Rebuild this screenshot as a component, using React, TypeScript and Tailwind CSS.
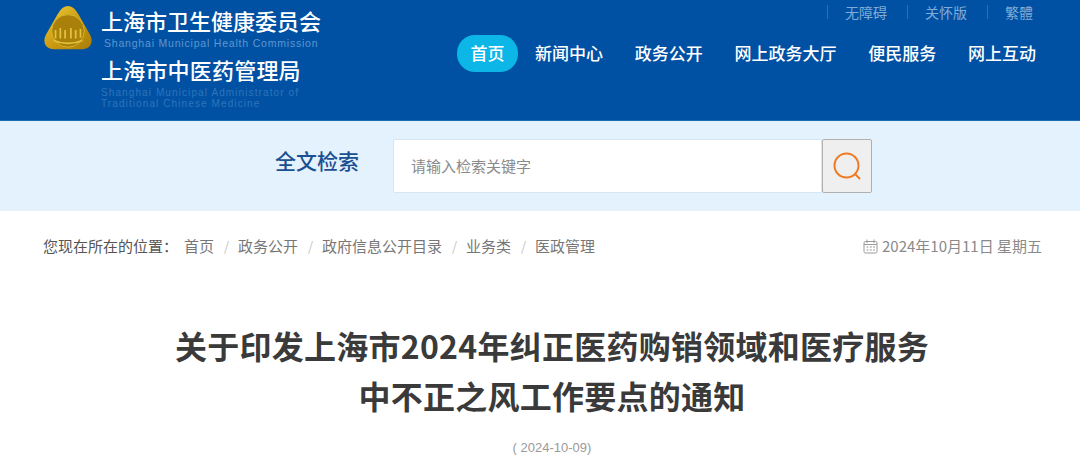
const navItems = ['新闻中心', '政务公开', '网上政务大厅', '便民服务', '网上互动'];
const topLinks = ['无障碍', '关怀版', '繁體'];
const crumbs = ['政务公开', '政府信息公开目录', '业务类', '医政管理'];

function Logo() {
  return (
    <svg width="50" height="48" viewBox="0 0 52 50" className="shrink-0">
      <defs>
        <linearGradient id="gold" x1="0" y1="0" x2="1" y2="1">
          <stop offset="0" stopColor="#f0d23c" />
          <stop offset="0.55" stopColor="#c9980f" />
          <stop offset="1" stopColor="#a87c08" />
        </linearGradient>
      </defs>
      <path
        d="M26 1 C31 1 34 5 37 10 L49 31 C53 39 49 46 41 46 L11 46 C3 46 -1 39 3 31 L15 10 C18 5 21 1 26 1 Z"
        fill="url(#gold)"
      />
      <circle cx="26" cy="27" r="17" fill="#a98009" stroke="#d9b52c" strokeWidth="1" />
      <path
        d="M13 26 v9 M18 24 v11 M23 26 v9 M29 24 v11 M34 26 v9 M39 25 v9 M11 37 C20 41 32 41 41 37"
        stroke="#e3c23d"
        strokeWidth="1.8"
        fill="none"
      />
    </svg>
  );
}

export default function App() {
  return (
    <div className="h-[474px] w-[1080px] overflow-hidden bg-white font-['Noto_Sans_CJK_SC','Liberation_Sans',sans-serif]">
      {/* 头部 */}
      <header className="flex h-[121px] border-b border-[#1b6db5] bg-[#0051a3] pl-[43px] pr-[44px]">
        <div className="pt-[5px]">
          <Logo />
        </div>
        <div className="ml-[8px] w-[230px] text-white">
          <div className="mt-[6px] text-[22px] font-medium leading-[28px]">上海市卫生健康委员会</div>
          <div className="ml-[3px] mt-[2px] font-['Liberation_Sans',sans-serif] text-[10.5px] leading-[14px] tracking-[0.8px] text-[#5f97d0]">
            Shanghai Municipal Health Commission
          </div>
          <div className="mt-[5px] text-[22px] font-medium leading-[28px] tracking-[0.2px]">上海市中医药管理局</div>
          <div className="mt-[4px] font-['Liberation_Sans',sans-serif] text-[10px] leading-[11px] tracking-[1.1px] text-[#2f74bb]">
            Shanghai Municipal Administrator of
            <br />
            Traditional Chinese Medicine
          </div>
        </div>
        <div className="ml-auto flex flex-col items-end">
          <div className="mr-[3px] mt-[3px] flex h-[18px] items-center gap-[20px] text-[14px] leading-[18px] text-[#7fabd8]">
            {topLinks.map((link) => (
              <div key={link} className="flex items-center gap-[17px]">
                <span className="h-[14px] w-px bg-[#2c6fb3]" />
                <span>{link}</span>
              </div>
            ))}
          </div>
          <nav className="mt-[14px] flex items-center text-[17px] font-medium text-white">
            <a className="flex h-[37px] w-[61px] items-center justify-center rounded-[18px] bg-[#0cb6e6] pb-[2px]">首页</a>
            {navItems.map((item, i) => (
              <a key={item} className={i === 0 ? 'ml-[17px] pb-[2px]' : 'ml-[31.75px] pb-[2px]'}>
                {item}
              </a>
            ))}
          </nav>
        </div>
      </header>

      {/* 检索 */}
      <section className="flex h-[90px] items-center bg-[#e3f2fd] pl-[275px]">
        <div className="w-[118px] pb-[13px] text-[21px] font-medium leading-[28px] text-[#1a4f92]">全文检索</div>
        <div className="flex h-[54px] w-[479px] items-stretch">
          <div className="flex flex-1 items-center rounded-l-[2px] border border-[#d5e6f5] bg-white pl-[17px] text-[15px] text-[#8a8a8a]">
            请输入检索关键字
          </div>
          <button className="flex w-[50px] items-center justify-center rounded-[2px] border border-[#b0b0b0] bg-[#efefef]">
            <svg width="28" height="28" viewBox="0 0 28 28" fill="none" stroke="#f07a22" strokeWidth="2">
              <circle cx="13.5" cy="13.5" r="12" />
              <path d="M22.5 22.5 L27 27" />
            </svg>
          </button>
        </div>
      </section>

      {/* 面包屑 */}
      <div className="flex h-[70px] items-center justify-between pl-[43px] pr-[38px] text-[15px] text-[#777777]">
        <div className="flex items-center">
          <span className="w-[141px] text-[#555555]">您现在所在的位置：</span>
          <span>首页</span>
          {crumbs.map((crumb) => (
            <span key={crumb} className="flex items-center">
              <span className="mx-[10px] w-[4px] text-[13px] text-[#c4c4c4]">/</span>
              <span>{crumb}</span>
            </span>
          ))}
        </div>
        <div className="flex items-center text-[15px] text-[#8a8a8a]">
          <svg width="15" height="15" viewBox="0 0 15 15" fill="none" stroke="#9a9a9a" strokeWidth="1" className="mr-[4px]">
            <rect x="1" y="2.5" width="13" height="11.5" rx="1.5" />
            <path d="M4 0.5v3.5 M11 0.5v3.5 M1 5.5h13 M3.5 8h2 M6.8 8h2 M10 8h2 M3.5 11h2 M6.8 11h2 M10 11h2" />
          </svg>
          <span>2024年10月11日&nbsp;星期五</span>
        </div>
      </div>

      {/* 标题 */}
      <div className="pl-[24px] text-center text-[#3a3a3a]">
        <h1 className="mt-[39px] text-[32px] font-bold leading-[50px] tracking-[0.25px]">
          关于印发上海市2024年纠正医药购销领域和医疗服务
          <br />
          中不正之风工作要点的通知
        </h1>
        <div className="mt-[18px] font-['Liberation_Sans',sans-serif] text-[13px] leading-[20px] text-[#9a9a9a]">( 2024-10-09)</div>
      </div>
    </div>
  );
}
